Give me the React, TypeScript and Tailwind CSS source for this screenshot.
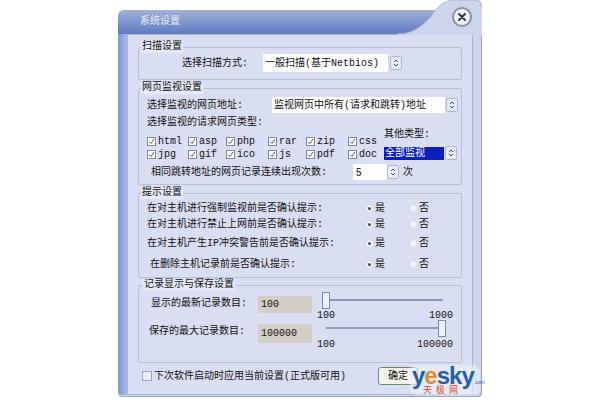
import { ReactNode } from "react";

const fileTypes = [
  ["html", "asp", "php", "rar", "zip", "css"],
  ["jpg", "gif", "ico", "js", "pdf", "doc"],
];
const typeColumns = ["w-[41px]", "w-[38px]", "w-[42px]", "w-[38px]", "w-[42px]", "w-[36px]"];

const prompts = [
  { label: "在对主机进行强制监视前是否确认提示:", rowClass: "h-[18px] pl-[8px]", labelClass: "w-[218px]" },
  { label: "在对主机进行禁止上网前是否确认提示:", rowClass: "h-[14px] pl-[8px]", labelClass: "w-[218px]" },
  { label: "在对主机产生IP冲突警告前是否确认提示:", rowClass: "h-[24px] pl-[8px]", labelClass: "w-[218px]" },
  { label: "在删除主机记录前是否确认提示:", rowClass: "h-[18px] pl-[11px]", labelClass: "w-[215px]" },
];

function Group({
  title,
  className,
  legendClass = "ml-[2px]",
  children,
}: {
  title: string;
  className: string;
  legendClass?: string;
  children: ReactNode;
}) {
  return (
    <fieldset className={`border border-[#b9c1d8] rounded-[2px] ${className}`}>
      <legend className={`bg-[#e6e9f7] px-[1px] text-[10px] leading-[12px] text-[#111] ${legendClass}`}>{title}</legend>
      {children}
    </fieldset>
  );
}

function Spinner() {
  return (
    <div className="flex h-[14px] w-[12px] items-center justify-center rounded-[2px] border border-[#aeb8cf] bg-[#e8ecf6]">
      <svg width="6" height="8" viewBox="0 0 6 8">
        <path d="M1 3 L3 1 L5 3 M1 5 L3 7 L5 5" fill="none" stroke="#3d4a70" strokeWidth="1" />
      </svg>
    </div>
  );
}

function Check({ name }: { name: string }) {
  return (
    <div className="flex items-center">
      <div className="flex h-[9px] w-[9px] items-center justify-center border border-[#7f8aa8] bg-white">
        <svg width="7" height="7" viewBox="0 0 7 7">
          <path d="M1 3.5 L3 5.5 L6 1" fill="none" stroke="#4a6a4a" strokeWidth="1" />
        </svg>
      </div>
      <span className="ml-[2px] text-[10px] text-[#111]">{name}</span>
    </div>
  );
}

function Radio({ label, checked }: { label: string; checked?: boolean }) {
  return (
    <div className="flex w-[44px] items-center">
      <div className="flex h-[9px] w-[9px] items-center justify-center rounded-full border border-[#cfd5e6] bg-[#f2f4fa]">
        {checked && <div className="h-[3px] w-[3px] rounded-full bg-[#3f4a6a]" />}
      </div>
      <span className="ml-[1px] text-[10px] text-[#111]">{label}</span>
    </div>
  );
}

function Slider({
  thumbRight,
  min,
  max,
  labelClass,
}: {
  thumbRight?: boolean;
  min: string;
  max: string;
  labelClass: string;
}) {
  return (
    <div className="-mt-[4px] flex w-[136px] flex-col">
      <div className={`relative flex h-[17px] items-start ${thumbRight ? "pl-[9px] pr-[15px] pt-[7px]" : "pl-[5px] pr-[10px] pt-[7px]"}`}>
        <div className="h-[2px] flex-1 bg-[#8e98b8]" />
        <div
          className={`absolute top-0 h-[17px] w-[8px] border border-[#7f88a6] bg-[#eef0f8] ${thumbRight ? "right-[7px]" : "left-[5px]"}`}
        />
      </div>
      <div className={`flex justify-between text-[10px] leading-[12px] text-[#111] ${labelClass}`}>
        <span>{min}</span>
        <span>{max}</span>
      </div>
    </div>
  );
}

function YeskyLogo() {
  return (
    <div className="absolute bottom-[1px] right-[1px] flex h-[30px] w-[70px] flex-col items-start rounded-[6px] bg-[#eef0f8]/60 pl-[2px] pt-[2px]">
      <div className="flex items-baseline font-['Liberation_Sans',sans-serif] text-[24px] font-bold leading-[18px] tracking-[-1px] text-[#1f5fa8]">
        <span>y</span>
        <span className="text-[#e8862a]">e</span>
        <span>sky</span>
        <span className="text-[5px] font-normal leading-none tracking-normal text-[#3a5f98]">.com</span>
      </div>
      <span className="ml-[11px] mt-[1px] text-[9px] leading-[10px] tracking-[4px] text-[#d8492a]">天极网</span>
    </div>
  );
}

export default function App() {
  return (
    <div className="h-[400px] w-[600px] overflow-hidden bg-white pl-[118px] pt-[10px] font-['Liberation_Mono','Noto_Sans_CJK_SC',monospace] text-[10px] text-[#111]">
      <div className="relative flex h-[387px] w-[364px] flex-col rounded-t-[6px] rounded-b-[4px] border-b border-r border-[#9ba8cc] bg-[#cdd5ee]">
        {/* title bar */}
        <div className="relative h-[24px] shrink-0 rounded-t-[6px] bg-gradient-to-b from-[#a0b1d8] to-[#5f7cc0] pl-[22px] pt-[6px] text-[10px] leading-[12px] text-[#e6ebf8]">
          系统设置
          <svg className="absolute right-[-1px] top-[-10px]" width="85" height="35" viewBox="0 0 85 35">
            <path
              d="M0 34 C15 34 25 27 35 15 C40 8 45 2 55 0 L78 0 Q85 0 85 8 L85 35 L0 35 Z"
              fill="#cdd5ee"
            />
            <path d="M0 34 C15 34 25 27 35 15 C40 8 45 2 55 0 L78 0 Q85 0 85 8" fill="none" stroke="#a7b2d2" strokeWidth="1" />
            <circle cx="65" cy="17" r="9" fill="#f2f3f8" stroke="#8a8f9c" strokeWidth="2" />
            <path d="M62 14 L68 20 M68 14 L62 20" stroke="#2f3550" strokeWidth="2" strokeLinecap="round" />
          </svg>
        </div>

        <div className="mb-[1px] flex flex-1">
          <div className="w-[9px] rounded-bl-[4px] bg-gradient-to-r from-[#7d97d2] to-[#a9b8e0]" />

          {/* body */}
          <div className="flex w-[346px] flex-col border border-[#a8b3d3] bg-[#dadef2] px-[10px] pt-[6px]">
            <Group title="扫描设置" className="h-[39px]">
              <div className="flex items-center pl-[43px] pt-[1px]">
                <span className="w-[81px]">选择扫描方式:</span>
                <div className="flex h-[18px] w-[125px] items-center bg-white pl-[2px]">一般扫描(基于Netbios)</div>
                <div className="ml-[2px]">
                  <Spinner />
                </div>
              </div>
            </Group>

            <Group title="网页监视设置" className="mt-[2px] h-[103px]">
              <div className="flex items-center pl-[8px] pt-[3px]">
                <span className="w-[125px]">选择监视的网页地址:</span>
                <div className="flex h-[16px] w-[173px] items-center bg-white pl-[2px]">监视网页中所有(请求和跳转)地址</div>
                <div className="ml-[1px]">
                  <Spinner />
                </div>
              </div>
              <div className="pl-[8px] pt-[3px] leading-[14px]">选择监视的请求网页类型:</div>
              <div className="flex pl-[8px]">
                <div className="flex flex-col pt-[4px]">
                  {fileTypes.map((row) => (
                    <div key={row[0]} className="flex h-[13px]">
                      {row.map((name, i) => (
                        <div key={name} className={typeColumns[i]}>
                          <Check name={name} />
                        </div>
                      ))}
                    </div>
                  ))}
                </div>
                <div className="-mt-[2px] flex flex-col">
                  <div className="h-[18px] leading-[14px]">其他类型:</div>
                  <div className="flex items-center gap-[1px]">
                    <div className="flex h-[13px] w-[60px] items-center bg-[#0a1fbd] pl-[1px] text-white">全部监视</div>
                    <Spinner />
                  </div>
                </div>
              </div>
              <div className="flex items-center pl-[12px] pt-[4px]">
                <span className="w-[202px]">相同跳转地址的网页记录连续出现次数:</span>
                <div className="flex h-[16px] w-[34px] items-center bg-white pl-[3px] font-['Liberation_Sans',sans-serif]">5</div>
                <Spinner />
                <span className="ml-[4px]">次</span>
              </div>
            </Group>

            <Group title="提示设置" className="mt-[2px] h-[91px]">
              <div className="flex flex-col">
                {prompts.map((p) => (
                  <div key={p.label} className={`flex items-center ${p.rowClass}`}>
                    <span className={p.labelClass}>{p.label}</span>
                    <Radio label="是" checked />
                    <Radio label="否" />
                  </div>
                ))}
              </div>
            </Group>

            <Group title="记录显示与保存设置" className="mt-[1px] h-[84px]" legendClass="ml-[4px]">
              <div className="flex h-[33px] pl-[12px] pt-[5px]">
                <span className="w-[107px]">显示的最新记录数目:</span>
                <div className="flex h-[17px] w-[54px] items-center bg-[#d3cfc6] pl-[3px]">100</div>
                <div className="ml-[5px]">
                  <Slider min="100" max="1000" labelClass="mt-[1px]" />
                </div>
              </div>
              <div className="flex pl-[10px]">
                <span className="w-[109px]">保存的最大记录数目:</span>
                <div className="flex h-[19px] w-[54px] items-center bg-[#d3cfc6] pl-[3px]">100000</div>
                <div className="ml-[5px]">
                  <Slider thumbRight min="100" max="100000" labelClass="mt-[2px]" />
                </div>
              </div>
            </Group>

            <div className="ml-[4px] mt-[4px] flex items-center">
              <div className="h-[10px] w-[10px] border border-[#9aa3bd] bg-[#eef0f8]" />
              <span className="ml-[2px]">下次软件启动时应用当前设置(正式版可用)</span>
              <button className="ml-[32px] h-[18px] w-[40px] rounded-[3px] border border-[#6f8a6a] bg-[#f2f5ea] text-[10px] text-[#111]">
                确定
              </button>
            </div>
          </div>
        </div>
        <YeskyLogo />
      </div>
    </div>
  );
}
